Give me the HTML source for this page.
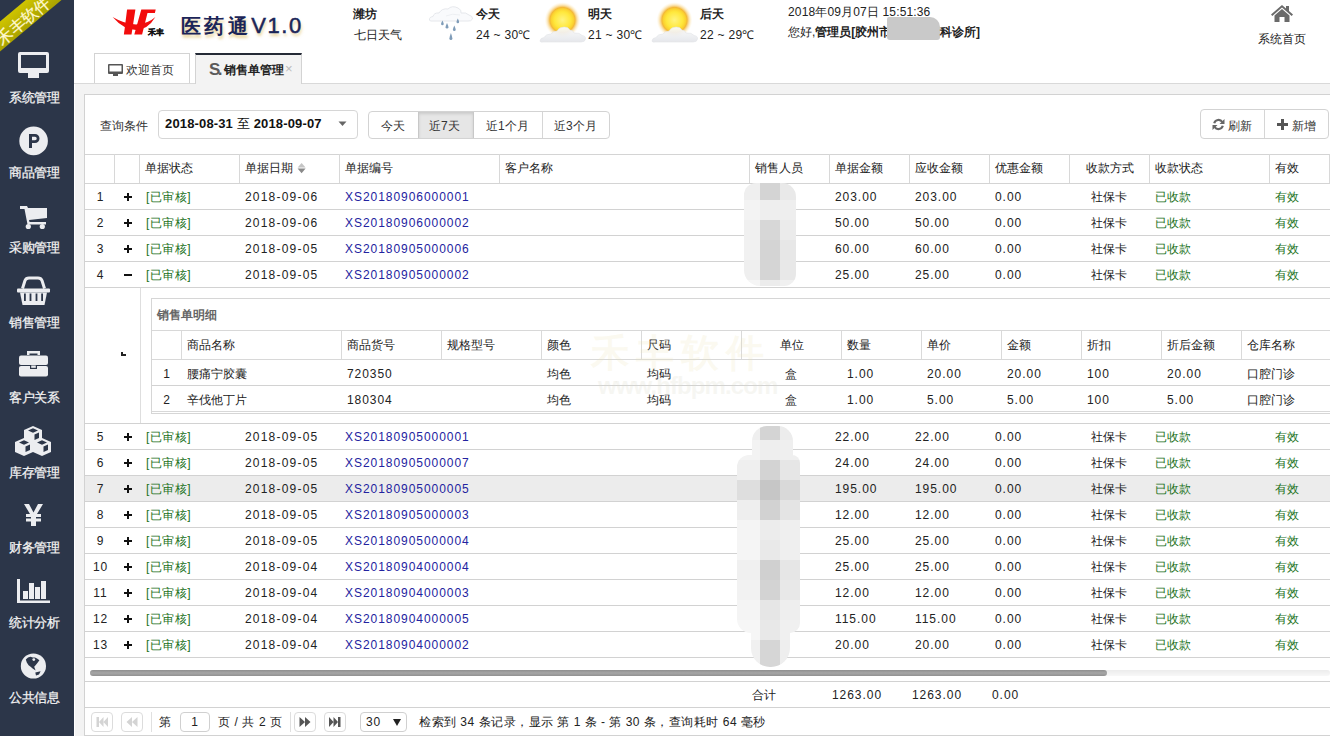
<!DOCTYPE html><html><head><meta charset="utf-8"><style>
*{margin:0;padding:0;box-sizing:border-box}
html,body{width:1330px;height:736px;overflow:hidden;background:#fff;font-family:"Liberation Sans",sans-serif;font-size:12px;color:#222}
div,span,svg{position:absolute}
.t{white-space:nowrap;line-height:14px}
.n{letter-spacing:0.95px}
.g{color:#1b721b}
.bl{color:#2323a0}
.hl{height:1px;background:#d2d2d2}
.vl{width:1px;background:#d2d2d2}
</style></head><body>
<div style="left:0;top:0;width:74px;height:736px;background:#2c3649;overflow:hidden">
<div style="left:-37px;top:9.5px;width:110px;height:23px;background:linear-gradient(#cfc400,#a9a200);transform:rotate(-40deg);color:#fff8d0;-webkit-text-stroke:0.25px #fff8d0;font-size:16px;line-height:16px;padding-top:7px;padding-left:9px;text-align:center">禾丰软件</div>
<div class="t" style="left:-2px;top:91px;width:73px;text-align:center;color:#f4f4f4;font-size:12.5px;letter-spacing:-0.2px;-webkit-text-stroke:0.25px #f4f4f4">系统管理</div>
<div class="t" style="left:-2px;top:166px;width:73px;text-align:center;color:#f4f4f4;font-size:12.5px;letter-spacing:-0.2px;-webkit-text-stroke:0.25px #f4f4f4">商品管理</div>
<div class="t" style="left:-2px;top:241px;width:73px;text-align:center;color:#f4f4f4;font-size:12.5px;letter-spacing:-0.2px;-webkit-text-stroke:0.25px #f4f4f4">采购管理</div>
<div class="t" style="left:-2px;top:316px;width:73px;text-align:center;color:#f4f4f4;font-size:12.5px;letter-spacing:-0.2px;-webkit-text-stroke:0.25px #f4f4f4">销售管理</div>
<div class="t" style="left:-2px;top:391px;width:73px;text-align:center;color:#f4f4f4;font-size:12.5px;letter-spacing:-0.2px;-webkit-text-stroke:0.25px #f4f4f4">客户关系</div>
<div class="t" style="left:-2px;top:466px;width:73px;text-align:center;color:#f4f4f4;font-size:12.5px;letter-spacing:-0.2px;-webkit-text-stroke:0.25px #f4f4f4">库存管理</div>
<div class="t" style="left:-2px;top:541px;width:73px;text-align:center;color:#f4f4f4;font-size:12.5px;letter-spacing:-0.2px;-webkit-text-stroke:0.25px #f4f4f4">财务管理</div>
<div class="t" style="left:-2px;top:616px;width:73px;text-align:center;color:#f4f4f4;font-size:12.5px;letter-spacing:-0.2px;-webkit-text-stroke:0.25px #f4f4f4">统计分析</div>
<div class="t" style="left:-2px;top:691px;width:73px;text-align:center;color:#f4f4f4;font-size:12.5px;letter-spacing:-0.2px;-webkit-text-stroke:0.25px #f4f4f4">公共信息</div>
<svg style="left:18px;top:52px" width="32" height="27" viewBox="0 0 32 27"><path fill="#ecedf0" d="M2 0h27a2 2 0 0 1 2 2v17a2 2 0 0 1-2 2H2a2 2 0 0 1-2-2V2a2 2 0 0 1 2-2zM3 3v13h25V3z"/><rect x="10" y="21" width="11" height="5" fill="#ecedf0"/></svg>
<svg style="left:19px;top:126px" width="30" height="30" viewBox="0 0 30 30"><circle cx="14.6" cy="14.9" r="14.3" fill="#ecedf0"/><path fill="#2c3649" d="M10 8h6a4.5 4.5 0 0 1 0 9h-3v5h-3zM13 10.8v3.5h3a1.75 1.75 0 0 0 0-3.5z"/></svg>
<svg style="left:19px;top:205px" width="30" height="25" viewBox="0 0 30 25"><path fill="#ecedf0" d="M1 1h7l1 2h19v10L10 15l0.5 2H27v2.5H8.5L5.5 4H1z"/><circle cx="9.3" cy="21.5" r="2.6" fill="#ecedf0"/><circle cx="23.3" cy="21.5" r="2.6" fill="#ecedf0"/></svg>
<svg style="left:17px;top:276px" width="34" height="30" viewBox="0 0 34 30"><path fill="none" stroke="#ecedf0" stroke-width="3" d="M5.5 12.5L8 4.5Q9 2 12 2h9q3 0 4 2.5l2.5 8"/><rect x="0" y="12.5" width="33" height="4" rx="1" fill="#ecedf0"/><path fill="#ecedf0" d="M3 16.5h27l-2.5 12.5h-22z"/><g fill="#2c3649"><rect x="7" y="17.5" width="1.8" height="7.5"/><rect x="12.6" y="17.5" width="1.8" height="7.5"/><rect x="18.6" y="17.5" width="1.8" height="7.5"/><rect x="24.2" y="17.5" width="1.8" height="7.5"/></g></svg>
<svg style="left:19px;top:351px" width="30" height="26" viewBox="0 0 30 26"><path fill="#ecedf0" d="M8 0h13v4h-2.5V2.5h-8V4H8z"/><rect x="0" y="4.5" width="29" height="9.5" rx="2" fill="#ecedf0"/><rect x="0" y="15" width="29" height="10.5" rx="2" fill="#ecedf0"/><rect x="11" y="14" width="7" height="4" fill="#2c3649"/><rect x="12.2" y="14.5" width="4.6" height="2.3" fill="#ecedf0"/></svg>
<svg style="left:15px;top:426px" width="36" height="30" viewBox="0 0 36 30"><g fill="#ecedf0"><path d="M18 0l9 4v9l-9 4l-9-4V4z"/><path d="M9 12l9 4v10l-9 4l-9-4V16z"/><path d="M27 12l9 4v10l-9 4l-9-4V16z"/></g><g fill="#2c3649"><path d="M13 4.5l5-2.2l5 2.2l-5 2.2z"/><path d="M19.5 8.5l4.5-2v5.5l-4.5 2z"/><path d="M4 16.5l5-2.2l5 2.2l-5 2.2z"/><path d="M10.5 20.5l4.5-2v5.5l-4.5 2z"/><path d="M22 16.5l5-2.2l5 2.2l-5 2.2z"/><path d="M28.5 20.5l4.5-2v5.5l-4.5 2z"/></g></svg>
<svg style="left:24px;top:503px" width="19" height="24" viewBox="0 0 19 24"><path fill="#ecedf0" d="M0 1h5l4.5 8.5L14 1h5l-6 10h4v3h-5v1.5h5v3h-5V23H7v-4.5H2v-3h5V14H2v-3h4z"/></svg>
<svg style="left:17px;top:578px" width="34" height="26" viewBox="0 0 34 26"><g fill="#ecedf0"><rect x="0" y="1" width="3" height="24"/><rect x="0" y="22.5" width="33" height="2.5"/><rect x="6" y="13" width="5" height="8"/><rect x="12" y="5" width="5" height="16"/><rect x="18" y="9" width="5" height="12"/><rect x="24" y="3" width="5" height="18"/></g></svg>
<svg style="left:20px;top:653px" width="27" height="27" viewBox="0 0 27 27"><circle cx="13.4" cy="13" r="12.6" fill="#ecedf0"/><path fill="#2c3649" d="M5.8 6.4L8 4.6L10.4 3.8L12.8 4.6L15 4.6L17 5.6L19.4 7.2L17.6 9.8L15.8 12L14.2 13.8L15.6 17.4L12.6 15.4L10.6 13.8L8.6 12.2L6.8 9.6z"/><circle cx="13.8" cy="6.6" r="1.4" fill="#ecedf0"/><path fill="#2c3649" d="M15.3 19.6L20.6 18.2L19 21.6L16 22.6z"/></svg>
</div>
<div style="left:74px;top:0;width:1256px;height:83px;background:#fff"></div>
<div class="hl" style="left:74px;top:83px;width:1256px;background:#d9d9d9"></div>
<div style="left:74px;top:84px;width:1256px;height:652px;background:#f3f3f3"></div>
<div style="left:74px;top:84px;width:1px;height:652px;background:#fff"></div>
<svg style="left:108px;top:4px" width="60" height="36" viewBox="0 0 60 36"><g fill="#f20c0c"><path d="M19.1 5.4h8.3l-3.9 25.2h-7.6z"/><path d="M33.3 5.4h14.4l-0.8 3.6h-7.4l-5.4 21.6h-7.8z"/><path d="M4.6 13Q16 19.8 28 20.6Q40 19.8 47.4 13Q40 25.5 28 26Q15.5 25.5 4.6 13z"/></g><text x="39.5" y="30.8" font-size="8" font-weight="bold" fill="#111" stroke="#111" stroke-width="0.3" font-family="Liberation Sans">禾丰</text></svg>
<div class="t" style="left:181px;top:13px;font-size:20px;line-height:26px;color:#1b2558;letter-spacing:3.4px;font-weight:bold;text-shadow:1px 3px 3px rgba(215,175,70,0.55)">医药通<span style="position:static;font-size:22px;font-weight:normal;letter-spacing:1.6px;-webkit-text-stroke:0.5px #1b2558">V1.0</span></div>
<div class="t" style="left:353px;top:7px;font-weight:bold;color:#222">潍坊</div>
<div class="t" style="left:354px;top:28px;color:#222">七日天气</div>
<div class="t" style="left:476px;top:7px;font-weight:bold;color:#222">今天</div>
<div class="t n" style="left:476px;top:28px;color:#222;letter-spacing:0.3px">24 ~ 30℃</div>
<div class="t" style="left:588px;top:7px;font-weight:bold;color:#222">明天</div>
<div class="t n" style="left:588px;top:28px;color:#222;letter-spacing:0.3px">21 ~ 30℃</div>
<div class="t" style="left:700px;top:7px;font-weight:bold;color:#222">后天</div>
<div class="t n" style="left:700px;top:28px;color:#222;letter-spacing:0.3px">22 ~ 29℃</div>
<svg style="left:428px;top:3px" width="46" height="42" viewBox="0 0 46 42"><path d="M1.5 17Q1 14 5 13.5Q6 9.5 11 10Q14 5 20 6Q24 2 30 5Q34 7 33 10Q38 9 41 12Q45 13 44.5 16Q43 18.5 40 18H4Q2 18.5 1.5 17z" fill="#f9fafc" stroke="#e3e5ea" stroke-width="0.9"/><path d="M18 13Q24 10 32 12" fill="none" stroke="#eaecf0" stroke-width="0.8"/><g fill="#7f9cb8"><path d="M14.4 17.5q1.3 2.5 1.3 3.5a1.3 1.3 0 0 1-2.6 0q0-1 1.3-3.5z"/><path d="M19 20q1.4 3 1.4 4.2a1.4 1.4 0 0 1-2.8 0q0-1.2 1.4-4.2z"/><path d="M26.3 22.5q1.4 3 1.4 4.2a1.4 1.4 0 0 1-2.8 0q0-1.2 1.4-4.2z"/><path d="M29.8 15.5q1.3 2.5 1.3 3.5a1.3 1.3 0 0 1-2.6 0q0-1 1.3-3.5z"/><path d="M22.9 30q1.5 4 1.5 5.5a1.5 1.5 0 0 1-3 0q0-1.5 1.5-5.5z"/></g></svg>
<svg style="left:539px;top:0px" width="50" height="44" viewBox="0 0 50 44"><defs><radialGradient id="sg563" cx="0.5" cy="0.5" r="0.5"><stop offset="0" stop-color="#fff480"/><stop offset="0.45" stop-color="#ffe83c"/><stop offset="0.62" stop-color="#fbd230"/><stop offset="0.7" stop-color="#f3b838"/><stop offset="0.8" stop-color="#f8d488" stop-opacity="0.8"/><stop offset="1" stop-color="#fff4d8" stop-opacity="0"/></radialGradient><linearGradient id="cl563" x1="0" y1="0" x2="0" y2="1"><stop offset="0" stop-color="#fbfbfc"/><stop offset="1" stop-color="#e4e6ea"/></linearGradient></defs><circle cx="23.5" cy="20" r="18" fill="url(#sg563)"/><path d="M1 41Q1 38 5 37.5Q7 34 12 34Q14 31 18 31Q20 27 25 27Q29 26.5 31 30Q34 30 35 33Q41 32.5 43 35.5Q47 36 46.5 39Q46 42 42 42H4Q1 42.5 1 41z" fill="url(#cl563)" stroke="#e0e2e6" stroke-width="0.6" opacity="0.92"/></svg>
<svg style="left:651px;top:0px" width="50" height="44" viewBox="0 0 50 44"><defs><radialGradient id="sg675" cx="0.5" cy="0.5" r="0.5"><stop offset="0" stop-color="#fff480"/><stop offset="0.45" stop-color="#ffe83c"/><stop offset="0.62" stop-color="#fbd230"/><stop offset="0.7" stop-color="#f3b838"/><stop offset="0.8" stop-color="#f8d488" stop-opacity="0.8"/><stop offset="1" stop-color="#fff4d8" stop-opacity="0"/></radialGradient><linearGradient id="cl675" x1="0" y1="0" x2="0" y2="1"><stop offset="0" stop-color="#fbfbfc"/><stop offset="1" stop-color="#e4e6ea"/></linearGradient></defs><circle cx="23.5" cy="20" r="18" fill="url(#sg675)"/><path d="M1 41Q1 38 5 37.5Q7 34 12 34Q14 31 18 31Q20 27 25 27Q29 26.5 31 30Q34 30 35 33Q41 32.5 43 35.5Q47 36 46.5 39Q46 42 42 42H4Q1 42.5 1 41z" fill="url(#cl675)" stroke="#e0e2e6" stroke-width="0.6" opacity="0.92"/></svg>
<div class="t n" style="left:788px;top:5px;color:#222;letter-spacing:0.15px">2018年09月07日 15:51:36</div>
<div class="t" style="left:788px;top:25px;color:#222">您好,<b style="position:static">管理员[胶州市</b></div>
<div style="left:887px;top:17px;width:53px;height:23px;background:#c9c9c9;border-radius:2px 10px 3px 3px"></div>
<div class="t" style="left:940px;top:25px;color:#222;font-weight:bold">科诊所]</div>
<svg style="left:1271px;top:5px" width="22" height="18" viewBox="0 0 22 18"><path fill="#6a6a6a" d="M11 0L0 9.5l1.3 1.5L11 2.6l9.7 8.4l1.3-1.5L18 6V1h-3v2.4z"/><path fill="#6a6a6a" d="M3.5 10.5L11 4l7.5 6.5V17h-5v-5h-5v5h-5z"/></svg>
<div class="t" style="left:1258px;top:32px;color:#222">系统首页</div>
<div style="left:94px;top:53px;width:96px;height:31px;background:#fff;border:1px solid #d3d3d3;border-bottom:none"></div>
<div class="hl" style="left:94px;top:83px;width:96px;background:#d9d9d9"></div>
<svg style="left:108px;top:64px" width="15" height="12" viewBox="0 0 15 12"><path fill="#555" d="M1 0h13a1 1 0 0 1 1 1v8a1 1 0 0 1-1 1H1a1 1 0 0 1-1-1V1a1 1 0 0 1 1-1zM1.5 1.5V7.5h12V1.5z"/><rect x="5" y="10" width="5" height="2" fill="#555"/></svg>
<div class="t" style="left:126px;top:63px;color:#333">欢迎首页</div>
<div style="left:195px;top:53px;width:107px;height:31px;background:#f3f3f3;border:1px solid #d3d3d3;border-top:2px solid #242a36;border-bottom:none"></div>
<div class="t" style="left:209px;top:61px;color:#5a5a5a;font-size:17px;font-weight:bold;letter-spacing:-2.5px;line-height:18px">S.</div>
<div class="t" style="left:224px;top:63px;color:#222;font-weight:bold">销售单管理</div>
<div class="t" style="left:285px;top:62px;color:#bbb;font-size:13px">×</div>
<div style="left:84px;top:94px;width:1260px;height:642px;background:#fff;border:1px solid #d2d2d2"></div>
<div class="t" style="left:100px;top:119px;color:#333">查询条件</div>
<div style="left:158px;top:110px;width:200px;height:29px;border:1px solid #d6d6d6;border-radius:4px;background:#fff"></div>
<div class="t n" style="left:165px;top:117px;color:#111;font-weight:bold;font-size:13px;letter-spacing:0.15px">2018-08-31 <span style="position:static;font-weight:normal">至</span> 2018-09-07</div>
<svg style="left:338px;top:121px" width="9" height="6" viewBox="0 0 9 6"><path d="M0.5 0.5h8L4.5 5z" fill="#666"/></svg>
<div style="left:368px;top:111px;width:242px;height:28px;border:1px solid #d3d3d3;border-radius:4px;background:#fff;overflow:hidden"><div style="left:49px;top:0;width:56px;height:26px;background:#e6e6e6;box-shadow:inset 0 2px 3px rgba(0,0,0,0.12);border-left:1px solid #c8c8c8;border-right:1px solid #c8c8c8"></div><div class="vl" style="left:173px;top:0;height:26px;background:#d6d6d6"></div></div>
<div class="t" style="left:381px;top:119px;color:#333">今天</div>
<div class="t" style="left:429px;top:119px;color:#333">近7天</div>
<div class="t" style="left:486px;top:119px;color:#333">近1个月</div>
<div class="t" style="left:554px;top:119px;color:#333">近3个月</div>
<div style="left:1200px;top:109px;width:129px;height:30px;border:1px solid #d3d3d3;border-radius:4px;background:#fff"></div>
<div class="vl" style="left:1264px;top:110px;height:28px;background:#d6d6d6"></div>
<svg style="left:1212px;top:118px" width="13" height="13" viewBox="0 0 13 13"><path fill="none" stroke="#666" stroke-width="2.2" d="M2.2 5.2A4.5 4.5 0 0 1 10.3 4M10.8 7.8A4.5 4.5 0 0 1 2.7 9"/><path fill="#666" d="M12.5 1v5h-5zM0.5 12V7h5z"/></svg>
<div class="t" style="left:1228px;top:119px;color:#333">刷新</div>
<svg style="left:1277px;top:119px" width="11" height="11" viewBox="0 0 11 11"><path fill="#555" d="M4 0h3v4h4v3H7v4H4V7H0V4h4z"/></svg>
<div class="t" style="left:1292px;top:119px;color:#333">新增</div>
<div class="hl" style="left:85px;top:154px;width:1245px;background:#d4d4d4"></div>
<div class="hl" style="left:85px;top:183px;width:1245px;background:#d4d4d4"></div>
<div class="vl" style="left:114px;top:154px;height:29px;background:#d8d8d8"></div>
<div class="vl" style="left:139px;top:154px;height:29px;background:#d8d8d8"></div>
<div class="vl" style="left:239px;top:154px;height:29px;background:#d8d8d8"></div>
<div class="vl" style="left:339px;top:154px;height:29px;background:#d8d8d8"></div>
<div class="vl" style="left:499px;top:154px;height:29px;background:#d8d8d8"></div>
<div class="vl" style="left:749px;top:154px;height:29px;background:#d8d8d8"></div>
<div class="vl" style="left:829px;top:154px;height:29px;background:#d8d8d8"></div>
<div class="vl" style="left:909px;top:154px;height:29px;background:#d8d8d8"></div>
<div class="vl" style="left:989px;top:154px;height:29px;background:#d8d8d8"></div>
<div class="vl" style="left:1069px;top:154px;height:29px;background:#d8d8d8"></div>
<div class="vl" style="left:1149px;top:154px;height:29px;background:#d8d8d8"></div>
<div class="vl" style="left:1269px;top:154px;height:29px;background:#d8d8d8"></div>
<div class="vl" style="left:1329px;top:154px;height:29px;background:#d8d8d8"></div>
<div class="t" style="left:145px;top:161px;color:#222">单据状态</div>
<div class="t" style="left:245px;top:161px;color:#222">单据日期</div>
<div class="t" style="left:345px;top:161px;color:#222">单据编号</div>
<div class="t" style="left:505px;top:161px;color:#222">客户名称</div>
<div class="t" style="left:755px;top:161px;color:#222">销售人员</div>
<div class="t" style="left:835px;top:161px;color:#222">单据金额</div>
<div class="t" style="left:915px;top:161px;color:#222">应收金额</div>
<div class="t" style="left:995px;top:161px;color:#222">优惠金额</div>
<div class="t" style="left:1086px;top:161px;color:#222">收款方式</div>
<div class="t" style="left:1155px;top:161px;color:#222">收款状态</div>
<div class="t" style="left:1275px;top:161px;color:#222">有效</div>
<svg style="left:297px;top:163px" width="9" height="11" viewBox="0 0 9 11"><path fill="#c4c4c4" d="M4.6 0L8.6 4.6H0.6z"/><path fill="#8a8a8a" d="M4.6 10.2L0.6 5.6H8.6z"/></svg>
<div class="t n" style="left:86px;top:190px;width:29px;text-align:center;color:#222">1</div>
<svg style="left:124px;top:193px" width="8" height="8" viewBox="0 0 8 8"><path fill="#111" d="M3 0h2v3h3v2H5v3H3V5H0V3h3z"/></svg>
<div class="t g" style="left:146px;top:190px;letter-spacing:0.5px">[已审核]</div>
<div class="t n" style="left:245px;top:190px;letter-spacing:1.2px">2018-09-06</div>
<div class="t n bl" style="left:345px;top:190px">XS20180906000001</div>
<div class="t n" style="left:835px;top:190px">203.00</div>
<div class="t n" style="left:915px;top:190px">203.00</div>
<div class="t n" style="left:995px;top:190px">0.00</div>
<div class="t" style="left:1069px;top:190px;width:80px;text-align:center">社保卡</div>
<div class="t g" style="left:1155px;top:190px">已收款</div>
<div class="t g" style="left:1275px;top:190px">有效</div>
<div class="hl" style="left:85px;top:209px;width:1245px"></div>
<div class="t n" style="left:86px;top:216px;width:29px;text-align:center;color:#222">2</div>
<svg style="left:124px;top:219px" width="8" height="8" viewBox="0 0 8 8"><path fill="#111" d="M3 0h2v3h3v2H5v3H3V5H0V3h3z"/></svg>
<div class="t g" style="left:146px;top:216px;letter-spacing:0.5px">[已审核]</div>
<div class="t n" style="left:245px;top:216px;letter-spacing:1.2px">2018-09-06</div>
<div class="t n bl" style="left:345px;top:216px">XS20180906000002</div>
<div class="t n" style="left:835px;top:216px">50.00</div>
<div class="t n" style="left:915px;top:216px">50.00</div>
<div class="t n" style="left:995px;top:216px">0.00</div>
<div class="t" style="left:1069px;top:216px;width:80px;text-align:center">社保卡</div>
<div class="t g" style="left:1155px;top:216px">已收款</div>
<div class="t g" style="left:1275px;top:216px">有效</div>
<div class="hl" style="left:85px;top:235px;width:1245px"></div>
<div class="t n" style="left:86px;top:242px;width:29px;text-align:center;color:#222">3</div>
<svg style="left:124px;top:245px" width="8" height="8" viewBox="0 0 8 8"><path fill="#111" d="M3 0h2v3h3v2H5v3H3V5H0V3h3z"/></svg>
<div class="t g" style="left:146px;top:242px;letter-spacing:0.5px">[已审核]</div>
<div class="t n" style="left:245px;top:242px;letter-spacing:1.2px">2018-09-05</div>
<div class="t n bl" style="left:345px;top:242px">XS20180905000006</div>
<div class="t n" style="left:835px;top:242px">60.00</div>
<div class="t n" style="left:915px;top:242px">60.00</div>
<div class="t n" style="left:995px;top:242px">0.00</div>
<div class="t" style="left:1069px;top:242px;width:80px;text-align:center">社保卡</div>
<div class="t g" style="left:1155px;top:242px">已收款</div>
<div class="t g" style="left:1275px;top:242px">有效</div>
<div class="hl" style="left:85px;top:261px;width:1245px"></div>
<div class="t n" style="left:86px;top:268px;width:29px;text-align:center;color:#222">4</div>
<div style="left:124px;top:274px;width:8px;height:2px;background:#111"></div>
<div class="t g" style="left:146px;top:268px;letter-spacing:0.5px">[已审核]</div>
<div class="t n" style="left:245px;top:268px;letter-spacing:1.2px">2018-09-05</div>
<div class="t n bl" style="left:345px;top:268px">XS20180905000002</div>
<div class="t n" style="left:835px;top:268px">25.00</div>
<div class="t n" style="left:915px;top:268px">25.00</div>
<div class="t n" style="left:995px;top:268px">0.00</div>
<div class="t" style="left:1069px;top:268px;width:80px;text-align:center">社保卡</div>
<div class="t g" style="left:1155px;top:268px">已收款</div>
<div class="t g" style="left:1275px;top:268px">有效</div>
<div class="hl" style="left:85px;top:287px;width:1245px"></div>
<div class="vl" style="left:140px;top:288px;height:135px;background:#dedede"></div>
<div style="left:121px;top:352px;width:5px;height:4px;border-left:2px solid #222;border-bottom:2px solid #222"></div>
<div style="left:151px;top:298px;width:1200px;height:116px;border:1px solid #d6d6d6;border-right:none;background:#fff"></div>
<div class="t" style="left:157px;top:308px;color:#666;font-weight:bold">销售单明细</div>
<div class="hl" style="left:152px;top:330px;width:1178px;background:#d8d8d8"></div>
<div class="hl" style="left:152px;top:359px;width:1178px;background:#d8d8d8"></div>
<div class="hl" style="left:152px;top:385px;width:1178px"></div>
<div class="hl" style="left:152px;top:411px;width:1178px;background:#d8d8d8"></div>
<div class="vl" style="left:181px;top:331px;height:28px;background:#dadada"></div>
<div class="vl" style="left:341px;top:331px;height:28px;background:#dadada"></div>
<div class="vl" style="left:441px;top:331px;height:28px;background:#dadada"></div>
<div class="vl" style="left:541px;top:331px;height:28px;background:#dadada"></div>
<div class="vl" style="left:641px;top:331px;height:28px;background:#dadada"></div>
<div class="vl" style="left:741px;top:331px;height:28px;background:#dadada"></div>
<div class="vl" style="left:841px;top:331px;height:28px;background:#dadada"></div>
<div class="vl" style="left:921px;top:331px;height:28px;background:#dadada"></div>
<div class="vl" style="left:1001px;top:331px;height:28px;background:#dadada"></div>
<div class="vl" style="left:1081px;top:331px;height:28px;background:#dadada"></div>
<div class="vl" style="left:1161px;top:331px;height:28px;background:#dadada"></div>
<div class="vl" style="left:1241px;top:331px;height:28px;background:#dadada"></div>
<div class="t" style="left:187px;top:338px">商品名称</div>
<div class="t" style="left:347px;top:338px">商品货号</div>
<div class="t" style="left:447px;top:338px">规格型号</div>
<div class="t" style="left:547px;top:338px">颜色</div>
<div class="t" style="left:647px;top:338px">尺码</div>
<div class="t" style="left:780px;top:338px">单位</div>
<div class="t" style="left:847px;top:338px">数量</div>
<div class="t" style="left:927px;top:338px">单价</div>
<div class="t" style="left:1007px;top:338px">金额</div>
<div class="t" style="left:1087px;top:338px">折扣</div>
<div class="t" style="left:1167px;top:338px">折后金额</div>
<div class="t" style="left:1247px;top:338px">仓库名称</div>
<div class="t n" style="left:152px;top:367px;width:30px;text-align:center">1</div>
<div class="t" style="left:187px;top:367px">腰痛宁胶囊</div>
<div class="t n" style="left:347px;top:367px">720350</div>
<div class="t" style="left:547px;top:367px">均色</div>
<div class="t" style="left:647px;top:367px">均码</div>
<div class="t" style="left:785px;top:367px">盒</div>
<div class="t n" style="left:847px;top:367px">1.00</div>
<div class="t n" style="left:927px;top:367px">20.00</div>
<div class="t n" style="left:1007px;top:367px">20.00</div>
<div class="t n" style="left:1087px;top:367px">100</div>
<div class="t n" style="left:1167px;top:367px">20.00</div>
<div class="t" style="left:1247px;top:367px">口腔门诊</div>
<div class="t n" style="left:152px;top:393px;width:30px;text-align:center">2</div>
<div class="t" style="left:187px;top:393px">辛伐他丁片</div>
<div class="t n" style="left:347px;top:393px">180304</div>
<div class="t" style="left:547px;top:393px">均色</div>
<div class="t" style="left:647px;top:393px">均码</div>
<div class="t" style="left:785px;top:393px">盒</div>
<div class="t n" style="left:847px;top:393px">1.00</div>
<div class="t n" style="left:927px;top:393px">5.00</div>
<div class="t n" style="left:1007px;top:393px">5.00</div>
<div class="t n" style="left:1087px;top:393px">100</div>
<div class="t n" style="left:1167px;top:393px">5.00</div>
<div class="t" style="left:1247px;top:393px">口腔门诊</div>
<div class="t" style="left:591px;top:333px;font-size:38px;line-height:40px;color:rgba(235,228,180,0.2);font-weight:bold;letter-spacing:7px">禾丰软件</div>
<div class="t" style="left:598px;top:372px;font-size:24px;line-height:28px;color:rgba(220,220,205,0.25);font-weight:bold;letter-spacing:-0.9px">www.hfbpm.com</div>
<div class="hl" style="left:85px;top:423px;width:1245px"></div>
<div class="t n" style="left:86px;top:430px;width:29px;text-align:center;color:#222">5</div>
<svg style="left:124px;top:433px" width="8" height="8" viewBox="0 0 8 8"><path fill="#111" d="M3 0h2v3h3v2H5v3H3V5H0V3h3z"/></svg>
<div class="t g" style="left:146px;top:430px;letter-spacing:0.5px">[已审核]</div>
<div class="t n" style="left:245px;top:430px;letter-spacing:1.2px">2018-09-05</div>
<div class="t n bl" style="left:345px;top:430px">XS20180905000001</div>
<div class="t n" style="left:835px;top:430px">22.00</div>
<div class="t n" style="left:915px;top:430px">22.00</div>
<div class="t n" style="left:995px;top:430px">0.00</div>
<div class="t" style="left:1069px;top:430px;width:80px;text-align:center">社保卡</div>
<div class="t g" style="left:1155px;top:430px">已收款</div>
<div class="t g" style="left:1275px;top:430px">有效</div>
<div class="hl" style="left:85px;top:449px;width:1245px"></div>
<div class="t n" style="left:86px;top:456px;width:29px;text-align:center;color:#222">6</div>
<svg style="left:124px;top:459px" width="8" height="8" viewBox="0 0 8 8"><path fill="#111" d="M3 0h2v3h3v2H5v3H3V5H0V3h3z"/></svg>
<div class="t g" style="left:146px;top:456px;letter-spacing:0.5px">[已审核]</div>
<div class="t n" style="left:245px;top:456px;letter-spacing:1.2px">2018-09-05</div>
<div class="t n bl" style="left:345px;top:456px">XS20180905000007</div>
<div class="t n" style="left:835px;top:456px">24.00</div>
<div class="t n" style="left:915px;top:456px">24.00</div>
<div class="t n" style="left:995px;top:456px">0.00</div>
<div class="t" style="left:1069px;top:456px;width:80px;text-align:center">社保卡</div>
<div class="t g" style="left:1155px;top:456px">已收款</div>
<div class="t g" style="left:1275px;top:456px">有效</div>
<div class="hl" style="left:85px;top:475px;width:1245px"></div>
<div style="left:85px;top:476px;width:1245px;height:25px;background:#ececec"></div>
<div class="t n" style="left:86px;top:482px;width:29px;text-align:center;color:#222">7</div>
<svg style="left:124px;top:485px" width="8" height="8" viewBox="0 0 8 8"><path fill="#111" d="M3 0h2v3h3v2H5v3H3V5H0V3h3z"/></svg>
<div class="t g" style="left:146px;top:482px;letter-spacing:0.5px">[已审核]</div>
<div class="t n" style="left:245px;top:482px;letter-spacing:1.2px">2018-09-05</div>
<div class="t n bl" style="left:345px;top:482px">XS20180905000005</div>
<div class="t n" style="left:835px;top:482px">195.00</div>
<div class="t n" style="left:915px;top:482px">195.00</div>
<div class="t n" style="left:995px;top:482px">0.00</div>
<div class="t" style="left:1069px;top:482px;width:80px;text-align:center">社保卡</div>
<div class="t g" style="left:1155px;top:482px">已收款</div>
<div class="t g" style="left:1275px;top:482px">有效</div>
<div class="hl" style="left:85px;top:501px;width:1245px"></div>
<div class="t n" style="left:86px;top:508px;width:29px;text-align:center;color:#222">8</div>
<svg style="left:124px;top:511px" width="8" height="8" viewBox="0 0 8 8"><path fill="#111" d="M3 0h2v3h3v2H5v3H3V5H0V3h3z"/></svg>
<div class="t g" style="left:146px;top:508px;letter-spacing:0.5px">[已审核]</div>
<div class="t n" style="left:245px;top:508px;letter-spacing:1.2px">2018-09-05</div>
<div class="t n bl" style="left:345px;top:508px">XS20180905000003</div>
<div class="t n" style="left:835px;top:508px">12.00</div>
<div class="t n" style="left:915px;top:508px">12.00</div>
<div class="t n" style="left:995px;top:508px">0.00</div>
<div class="t" style="left:1069px;top:508px;width:80px;text-align:center">社保卡</div>
<div class="t g" style="left:1155px;top:508px">已收款</div>
<div class="t g" style="left:1275px;top:508px">有效</div>
<div class="hl" style="left:85px;top:527px;width:1245px"></div>
<div class="t n" style="left:86px;top:534px;width:29px;text-align:center;color:#222">9</div>
<svg style="left:124px;top:537px" width="8" height="8" viewBox="0 0 8 8"><path fill="#111" d="M3 0h2v3h3v2H5v3H3V5H0V3h3z"/></svg>
<div class="t g" style="left:146px;top:534px;letter-spacing:0.5px">[已审核]</div>
<div class="t n" style="left:245px;top:534px;letter-spacing:1.2px">2018-09-05</div>
<div class="t n bl" style="left:345px;top:534px">XS20180905000004</div>
<div class="t n" style="left:835px;top:534px">25.00</div>
<div class="t n" style="left:915px;top:534px">25.00</div>
<div class="t n" style="left:995px;top:534px">0.00</div>
<div class="t" style="left:1069px;top:534px;width:80px;text-align:center">社保卡</div>
<div class="t g" style="left:1155px;top:534px">已收款</div>
<div class="t g" style="left:1275px;top:534px">有效</div>
<div class="hl" style="left:85px;top:553px;width:1245px"></div>
<div class="t n" style="left:86px;top:560px;width:29px;text-align:center;color:#222">10</div>
<svg style="left:124px;top:563px" width="8" height="8" viewBox="0 0 8 8"><path fill="#111" d="M3 0h2v3h3v2H5v3H3V5H0V3h3z"/></svg>
<div class="t g" style="left:146px;top:560px;letter-spacing:0.5px">[已审核]</div>
<div class="t n" style="left:245px;top:560px;letter-spacing:1.2px">2018-09-04</div>
<div class="t n bl" style="left:345px;top:560px">XS20180904000004</div>
<div class="t n" style="left:835px;top:560px">25.00</div>
<div class="t n" style="left:915px;top:560px">25.00</div>
<div class="t n" style="left:995px;top:560px">0.00</div>
<div class="t" style="left:1069px;top:560px;width:80px;text-align:center">社保卡</div>
<div class="t g" style="left:1155px;top:560px">已收款</div>
<div class="t g" style="left:1275px;top:560px">有效</div>
<div class="hl" style="left:85px;top:579px;width:1245px"></div>
<div class="t n" style="left:86px;top:586px;width:29px;text-align:center;color:#222">11</div>
<svg style="left:124px;top:589px" width="8" height="8" viewBox="0 0 8 8"><path fill="#111" d="M3 0h2v3h3v2H5v3H3V5H0V3h3z"/></svg>
<div class="t g" style="left:146px;top:586px;letter-spacing:0.5px">[已审核]</div>
<div class="t n" style="left:245px;top:586px;letter-spacing:1.2px">2018-09-04</div>
<div class="t n bl" style="left:345px;top:586px">XS20180904000003</div>
<div class="t n" style="left:835px;top:586px">12.00</div>
<div class="t n" style="left:915px;top:586px">12.00</div>
<div class="t n" style="left:995px;top:586px">0.00</div>
<div class="t" style="left:1069px;top:586px;width:80px;text-align:center">社保卡</div>
<div class="t g" style="left:1155px;top:586px">已收款</div>
<div class="t g" style="left:1275px;top:586px">有效</div>
<div class="hl" style="left:85px;top:605px;width:1245px"></div>
<div class="t n" style="left:86px;top:612px;width:29px;text-align:center;color:#222">12</div>
<svg style="left:124px;top:615px" width="8" height="8" viewBox="0 0 8 8"><path fill="#111" d="M3 0h2v3h3v2H5v3H3V5H0V3h3z"/></svg>
<div class="t g" style="left:146px;top:612px;letter-spacing:0.5px">[已审核]</div>
<div class="t n" style="left:245px;top:612px;letter-spacing:1.2px">2018-09-04</div>
<div class="t n bl" style="left:345px;top:612px">XS20180904000005</div>
<div class="t n" style="left:835px;top:612px">115.00</div>
<div class="t n" style="left:915px;top:612px">115.00</div>
<div class="t n" style="left:995px;top:612px">0.00</div>
<div class="t" style="left:1069px;top:612px;width:80px;text-align:center">社保卡</div>
<div class="t g" style="left:1155px;top:612px">已收款</div>
<div class="t g" style="left:1275px;top:612px">有效</div>
<div class="hl" style="left:85px;top:631px;width:1245px"></div>
<div class="t n" style="left:86px;top:638px;width:29px;text-align:center;color:#222">13</div>
<svg style="left:124px;top:641px" width="8" height="8" viewBox="0 0 8 8"><path fill="#111" d="M3 0h2v3h3v2H5v3H3V5H0V3h3z"/></svg>
<div class="t g" style="left:146px;top:638px;letter-spacing:0.5px">[已审核]</div>
<div class="t n" style="left:245px;top:638px;letter-spacing:1.2px">2018-09-04</div>
<div class="t n bl" style="left:345px;top:638px">XS20180904000002</div>
<div class="t n" style="left:835px;top:638px">20.00</div>
<div class="t n" style="left:915px;top:638px">20.00</div>
<div class="t n" style="left:995px;top:638px">0.00</div>
<div class="t" style="left:1069px;top:638px;width:80px;text-align:center">社保卡</div>
<div class="t g" style="left:1155px;top:638px">已收款</div>
<div class="t g" style="left:1275px;top:638px">有效</div>
<div class="hl" style="left:85px;top:657px;width:1245px"></div>
<div style="left:744px;top:183px;width:52px;height:103px;overflow:hidden;border-radius:12px 14px 12px 16px"><div style="left:-14px;top:-1px;width:30px;height:18px;background:#efefef"></div><div style="left:16px;top:-1px;width:20px;height:18px;background:#d4d4d4"></div><div style="left:36px;top:-1px;width:30px;height:18px;background:#e9e9e9"></div><div style="left:-14px;top:17px;width:30px;height:20px;background:#f3f3f3"></div><div style="left:16px;top:17px;width:20px;height:20px;background:#eeeeee"></div><div style="left:36px;top:17px;width:30px;height:20px;background:#eeeeee"></div><div style="left:-14px;top:37px;width:30px;height:20px;background:#f0f0f0"></div><div style="left:16px;top:37px;width:20px;height:20px;background:#d7d7d7"></div><div style="left:36px;top:37px;width:30px;height:20px;background:#ebebeb"></div><div style="left:-14px;top:57px;width:30px;height:20px;background:#f1f1f1"></div><div style="left:16px;top:57px;width:20px;height:20px;background:#d4d4d4"></div><div style="left:36px;top:57px;width:30px;height:20px;background:#e7e7e7"></div><div style="left:-14px;top:77px;width:30px;height:20px;background:#efefef"></div><div style="left:16px;top:77px;width:20px;height:20px;background:#d5d5d5"></div><div style="left:36px;top:77px;width:30px;height:20px;background:#e8e8e8"></div><div style="left:-14px;top:97px;width:30px;height:10px;background:#f5f5f5"></div><div style="left:16px;top:97px;width:20px;height:10px;background:#ececec"></div><div style="left:36px;top:97px;width:30px;height:10px;background:#f0f0f0"></div></div>
<div style="left:752px;top:426px;width:41px;height:34px;overflow:hidden;border-radius:15px 15px 0 0"><div style="left:-52px;top:-6px;width:60px;height:20px;background:#efefef"></div><div style="left:8px;top:-6px;width:20px;height:20px;background:#d4d4d4"></div><div style="left:28px;top:-6px;width:40px;height:20px;background:#ececec"></div><div style="left:-52px;top:14px;width:60px;height:20px;background:#f3f3f3"></div><div style="left:8px;top:14px;width:20px;height:20px;background:#eeeeee"></div><div style="left:28px;top:14px;width:40px;height:20px;background:#efefef"></div><div style="left:-52px;top:34px;width:60px;height:20px;background:#efefef"></div><div style="left:8px;top:34px;width:20px;height:20px;background:#d3d3d3"></div><div style="left:28px;top:34px;width:40px;height:20px;background:#e6e6e6"></div><div style="left:-52px;top:54px;width:60px;height:20px;background:#dedede"></div><div style="left:8px;top:54px;width:20px;height:20px;background:#c6c6c6"></div><div style="left:28px;top:54px;width:40px;height:20px;background:#d9d9d9"></div><div style="left:-52px;top:74px;width:60px;height:20px;background:#eeeeee"></div><div style="left:8px;top:74px;width:20px;height:20px;background:#d2d2d2"></div><div style="left:28px;top:74px;width:40px;height:20px;background:#e4e4e4"></div><div style="left:-52px;top:94px;width:60px;height:20px;background:#f4f4f4"></div><div style="left:8px;top:94px;width:20px;height:20px;background:#ececec"></div><div style="left:28px;top:94px;width:40px;height:20px;background:#efefef"></div><div style="left:-52px;top:114px;width:60px;height:20px;background:#f5f5f5"></div><div style="left:8px;top:114px;width:20px;height:20px;background:#e9e9e9"></div><div style="left:28px;top:114px;width:40px;height:20px;background:#efefef"></div><div style="left:-52px;top:134px;width:60px;height:20px;background:#f0f0f0"></div><div style="left:8px;top:134px;width:20px;height:20px;background:#d0d0d0"></div><div style="left:28px;top:134px;width:40px;height:20px;background:#e6e6e6"></div><div style="left:-52px;top:154px;width:60px;height:20px;background:#f2f2f2"></div><div style="left:8px;top:154px;width:20px;height:20px;background:#d3d3d3"></div><div style="left:28px;top:154px;width:40px;height:20px;background:#e8e8e8"></div><div style="left:-52px;top:174px;width:60px;height:20px;background:#f4f4f4"></div><div style="left:8px;top:174px;width:20px;height:20px;background:#e6e6e6"></div><div style="left:28px;top:174px;width:40px;height:20px;background:#eeeeee"></div><div style="left:-52px;top:194px;width:60px;height:20px;background:#f6f6f6"></div><div style="left:8px;top:194px;width:20px;height:20px;background:#e8e8e8"></div><div style="left:28px;top:194px;width:40px;height:20px;background:#f0f0f0"></div><div style="left:-52px;top:214px;width:60px;height:30px;background:#f0f0f0"></div><div style="left:8px;top:214px;width:20px;height:30px;background:#d6d6d6"></div><div style="left:28px;top:214px;width:40px;height:30px;background:#eeeeee"></div></div>
<div style="left:737px;top:455px;width:63px;height:178px;overflow:hidden;border-radius:12px 8px 10px 14px"><div style="left:-37px;top:-35px;width:60px;height:20px;background:#efefef"></div><div style="left:23px;top:-35px;width:20px;height:20px;background:#d4d4d4"></div><div style="left:43px;top:-35px;width:40px;height:20px;background:#ececec"></div><div style="left:-37px;top:-15px;width:60px;height:20px;background:#f3f3f3"></div><div style="left:23px;top:-15px;width:20px;height:20px;background:#eeeeee"></div><div style="left:43px;top:-15px;width:40px;height:20px;background:#efefef"></div><div style="left:-37px;top:5px;width:60px;height:20px;background:#efefef"></div><div style="left:23px;top:5px;width:20px;height:20px;background:#d3d3d3"></div><div style="left:43px;top:5px;width:40px;height:20px;background:#e6e6e6"></div><div style="left:-37px;top:25px;width:60px;height:20px;background:#dedede"></div><div style="left:23px;top:25px;width:20px;height:20px;background:#c6c6c6"></div><div style="left:43px;top:25px;width:40px;height:20px;background:#d9d9d9"></div><div style="left:-37px;top:45px;width:60px;height:20px;background:#eeeeee"></div><div style="left:23px;top:45px;width:20px;height:20px;background:#d2d2d2"></div><div style="left:43px;top:45px;width:40px;height:20px;background:#e4e4e4"></div><div style="left:-37px;top:65px;width:60px;height:20px;background:#f4f4f4"></div><div style="left:23px;top:65px;width:20px;height:20px;background:#ececec"></div><div style="left:43px;top:65px;width:40px;height:20px;background:#efefef"></div><div style="left:-37px;top:85px;width:60px;height:20px;background:#f5f5f5"></div><div style="left:23px;top:85px;width:20px;height:20px;background:#e9e9e9"></div><div style="left:43px;top:85px;width:40px;height:20px;background:#efefef"></div><div style="left:-37px;top:105px;width:60px;height:20px;background:#f0f0f0"></div><div style="left:23px;top:105px;width:20px;height:20px;background:#d0d0d0"></div><div style="left:43px;top:105px;width:40px;height:20px;background:#e6e6e6"></div><div style="left:-37px;top:125px;width:60px;height:20px;background:#f2f2f2"></div><div style="left:23px;top:125px;width:20px;height:20px;background:#d3d3d3"></div><div style="left:43px;top:125px;width:40px;height:20px;background:#e8e8e8"></div><div style="left:-37px;top:145px;width:60px;height:20px;background:#f4f4f4"></div><div style="left:23px;top:145px;width:20px;height:20px;background:#e6e6e6"></div><div style="left:43px;top:145px;width:40px;height:20px;background:#eeeeee"></div><div style="left:-37px;top:165px;width:60px;height:20px;background:#f6f6f6"></div><div style="left:23px;top:165px;width:20px;height:20px;background:#e8e8e8"></div><div style="left:43px;top:165px;width:40px;height:20px;background:#f0f0f0"></div><div style="left:-37px;top:185px;width:60px;height:30px;background:#f0f0f0"></div><div style="left:23px;top:185px;width:20px;height:30px;background:#d6d6d6"></div><div style="left:43px;top:185px;width:40px;height:30px;background:#eeeeee"></div></div>
<div style="left:751px;top:625px;width:39px;height:42px;overflow:hidden;border-radius:0 0 19px 19px"><div style="left:-51px;top:-205px;width:60px;height:20px;background:#efefef"></div><div style="left:9px;top:-205px;width:20px;height:20px;background:#d4d4d4"></div><div style="left:29px;top:-205px;width:40px;height:20px;background:#ececec"></div><div style="left:-51px;top:-185px;width:60px;height:20px;background:#f3f3f3"></div><div style="left:9px;top:-185px;width:20px;height:20px;background:#eeeeee"></div><div style="left:29px;top:-185px;width:40px;height:20px;background:#efefef"></div><div style="left:-51px;top:-165px;width:60px;height:20px;background:#efefef"></div><div style="left:9px;top:-165px;width:20px;height:20px;background:#d3d3d3"></div><div style="left:29px;top:-165px;width:40px;height:20px;background:#e6e6e6"></div><div style="left:-51px;top:-145px;width:60px;height:20px;background:#dedede"></div><div style="left:9px;top:-145px;width:20px;height:20px;background:#c6c6c6"></div><div style="left:29px;top:-145px;width:40px;height:20px;background:#d9d9d9"></div><div style="left:-51px;top:-125px;width:60px;height:20px;background:#eeeeee"></div><div style="left:9px;top:-125px;width:20px;height:20px;background:#d2d2d2"></div><div style="left:29px;top:-125px;width:40px;height:20px;background:#e4e4e4"></div><div style="left:-51px;top:-105px;width:60px;height:20px;background:#f4f4f4"></div><div style="left:9px;top:-105px;width:20px;height:20px;background:#ececec"></div><div style="left:29px;top:-105px;width:40px;height:20px;background:#efefef"></div><div style="left:-51px;top:-85px;width:60px;height:20px;background:#f5f5f5"></div><div style="left:9px;top:-85px;width:20px;height:20px;background:#e9e9e9"></div><div style="left:29px;top:-85px;width:40px;height:20px;background:#efefef"></div><div style="left:-51px;top:-65px;width:60px;height:20px;background:#f0f0f0"></div><div style="left:9px;top:-65px;width:20px;height:20px;background:#d0d0d0"></div><div style="left:29px;top:-65px;width:40px;height:20px;background:#e6e6e6"></div><div style="left:-51px;top:-45px;width:60px;height:20px;background:#f2f2f2"></div><div style="left:9px;top:-45px;width:20px;height:20px;background:#d3d3d3"></div><div style="left:29px;top:-45px;width:40px;height:20px;background:#e8e8e8"></div><div style="left:-51px;top:-25px;width:60px;height:20px;background:#f4f4f4"></div><div style="left:9px;top:-25px;width:20px;height:20px;background:#e6e6e6"></div><div style="left:29px;top:-25px;width:40px;height:20px;background:#eeeeee"></div><div style="left:-51px;top:-5px;width:60px;height:20px;background:#f6f6f6"></div><div style="left:9px;top:-5px;width:20px;height:20px;background:#e8e8e8"></div><div style="left:29px;top:-5px;width:40px;height:20px;background:#f0f0f0"></div><div style="left:-51px;top:15px;width:60px;height:30px;background:#f0f0f0"></div><div style="left:9px;top:15px;width:20px;height:30px;background:#d6d6d6"></div><div style="left:29px;top:15px;width:40px;height:30px;background:#eeeeee"></div></div>
<div style="left:90px;top:670px;width:1240px;height:6px;border-radius:3px;background:linear-gradient(#ececec,#f8f8f8)"></div>
<div style="left:90px;top:670px;width:1017px;height:6px;border-radius:3px;background:linear-gradient(#8f8f8f,#a6a6a6 50%,#929292)"></div>
<div class="hl" style="left:85px;top:681px;width:1245px"></div>
<div class="t" style="left:752px;top:688px">合计</div>
<div class="t n" style="left:832px;top:688px">1263.00</div>
<div class="t n" style="left:912px;top:688px">1263.00</div>
<div class="t n" style="left:992px;top:688px">0.00</div>
<div class="hl" style="left:85px;top:707px;width:1245px"></div>
<div class="hl" style="left:85px;top:735px;width:1245px;background:#d2d2d2"></div>
<div class="t" style="left:0;top:0"></div>
<div style="left:91px;top:712px;width:22px;height:20px;border:1px solid #dcdcdc;border-radius:4px;background:#fff"></div>
<svg style="left:95px;top:716px" width="14" height="12" viewBox="0 0 14 12"><path fill="#d4d4d4" d="M1.5 1h2.5v10H1.5zM4 6L8.5 1v10zM8.5 6L13 1v10z"/></svg>
<div style="left:121px;top:712px;width:22px;height:20px;border:1px solid #dcdcdc;border-radius:4px;background:#fff"></div>
<svg style="left:125px;top:716px" width="14" height="12" viewBox="0 0 14 12"><path fill="#d4d4d4" d="M1.5 6L7 1v10zM7 6l5.5-5v10z"/></svg>
<div class="vl" style="left:151px;top:712px;height:20px;background:#e0e0e0"></div>
<div class="t" style="left:159px;top:715px">第</div>
<div style="left:180px;top:712px;width:30px;height:20px;border:1px solid #d0d0d0;border-radius:4px;background:#fff"></div>
<div class="t n" style="left:180px;top:715px;width:30px;text-align:center">1</div>
<div class="t" style="left:218px;top:715px;letter-spacing:0.6px">页 / 共 2 页</div>
<div class="vl" style="left:290px;top:712px;height:20px;background:#e0e0e0"></div>
<div style="left:294px;top:712px;width:22px;height:20px;border:1px solid #dcdcdc;border-radius:4px;background:#fff"></div>
<svg style="left:298px;top:716px" width="14" height="12" viewBox="0 0 14 12"><path fill="#555" d="M1.5 1L7 6L1.5 11zM7 1l5.5 5L7 11z"/></svg>
<div style="left:324px;top:712px;width:22px;height:20px;border:1px solid #dcdcdc;border-radius:4px;background:#fff"></div>
<svg style="left:328px;top:716px" width="14" height="12" viewBox="0 0 14 12"><path fill="#555" d="M1 1l4.5 5L1 11zM5.5 1L10 6L5.5 11zM10 1h2.5v10H10z"/></svg>
<div style="left:360px;top:712px;width:47px;height:20px;border:1px solid #d0d0d0;border-radius:4px;background:#fff"></div>
<div class="t n" style="left:366px;top:715px">30</div>
<svg style="left:393px;top:719px" width="8" height="7" viewBox="0 0 8 7"><path fill="#222" d="M0 0h8L4 7z"/></svg>
<div class="t" style="left:419px;top:715px;letter-spacing:0.5px">检索到 34 条记录，显示 第 1 条 - 第 30 条，查询耗时 64 毫秒</div>
</body></html>
